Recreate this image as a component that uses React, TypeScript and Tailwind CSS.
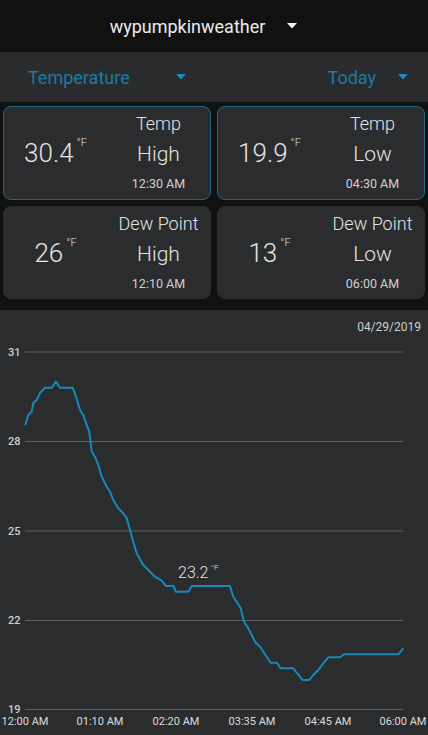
import React from 'react';

const caret = (color: string) => (
  <svg width="10" height="6" viewBox="0 0 10 6">
    <path d="M0 0 L10 0 L5 5.5 Z" fill={color} />
  </svg>
);

type Card = { value: string; label: string; kind: string; time: string; active?: boolean };

const cards: Card[] = [
  { value: '30.4', label: 'Temp', kind: 'High', time: '12:30 AM', active: true },
  { value: '19.9', label: 'Temp', kind: 'Low', time: '04:30 AM', active: true },
  { value: '26', label: 'Dew Point', kind: 'High', time: '12:10 AM' },
  { value: '13', label: 'Dew Point', kind: 'Low', time: '06:00 AM' },
];

// traced from the reference, page coordinates
const points: [number, number][] = [
  [25.3, 425], [28.3, 415], [31.7, 411.7], [33.3, 403], [36.7, 400], [40, 393], [45, 387.7],
  [51.7, 387.7], [56, 381.7], [60, 387.7], [72.7, 387.7], [76, 396.7], [80, 410], [83.3, 415],
  [87.3, 426.7], [89.3, 431.7], [91.7, 451.7], [95, 456.7], [98.3, 465], [101.7, 476.7],
  [106.7, 486.7], [110, 491.7], [113.3, 500], [118.3, 508.3], [123.3, 513.3], [126.7, 518.3],
  [130, 530], [132.7, 540], [136.7, 553.3], [143.3, 565], [150, 571.7], [155, 576.7],
  [161.7, 580.7], [166, 586], [173.3, 586], [176, 591.7], [188.3, 591.7], [191.7, 586],
  [230, 586], [233.3, 596.7], [236.7, 601.7], [240.7, 608.3], [244, 621.7], [248.3, 628.3],
  [251.7, 635], [255, 641.7], [260, 646.7], [263.3, 651.7], [266.7, 656.7], [270.7, 662.7],
  [276.7, 662.7], [280.7, 668.3], [293.3, 668.3], [297.3, 673.3], [302.7, 680], [309.3, 680],
  [313.3, 675], [318.3, 670], [323.3, 663.3], [328.3, 657.3], [340, 657.3], [344, 654.3],
  [398.3, 654.3], [403.3, 648.3],
];

const yTicks = [
  { v: '31', y: 352 },
  { v: '28', y: 441.5 },
  { v: '25', y: 531 },
  { v: '22', y: 620.5 },
  { v: '19', y: 709.5 },
];

const xTicks = [
  { t: '12:00 AM', x: 25 },
  { t: '01:10 AM', x: 100 },
  { t: '02:20 AM', x: 176 },
  { t: '03:35 AM', x: 252 },
  { t: '04:45 AM', x: 328 },
  { t: '06:00 AM', x: 403 },
];

function StatCard({ c }: { c: Card }) {
  return (
    <div
      className={
        'grid grid-cols-2 rounded-[8px] bg-[#2b2c2e] text-[#e4e4e4] font-light ' +
        (c.active ? 'border border-[#1c6a88]' : 'border border-[#2b2c2e]')
      }
    >
      <div className="flex items-center justify-center">
        <span className="text-[26px] leading-[30px]">{c.value}</span>
        <span className="text-[11px] leading-[12px] self-start mt-[30px] ml-[3px]">°F</span>
      </div>
      <div className="flex flex-col items-center">
        <span className="text-[18px] leading-[24px] mt-[5px]">{c.label}</span>
        <span className="text-[21px] leading-[30px] mt-[3px]">{c.kind}</span>
        <span className="text-[12.5px] leading-[16px] mt-[7px] font-normal text-[#d0d0d0]">{c.time}</span>
      </div>
    </div>
  );
}

export default function App() {
  return (
    <div
      className="w-[428px] h-[735px] flex flex-col bg-[#111111] overflow-hidden"
      style={{ fontFamily: 'Roboto, "Noto Sans", sans-serif' }}
    >
      <div className="h-[52px] flex items-center justify-center gap-[22px] pr-[21px] shrink-0">
        <span className="text-[18px] text-[#ececec]">wypumpkinweather</span>
        {caret('#f2f2f2')}
      </div>

      <div className="h-[50px] bg-[#2a2b2d] flex items-center justify-between pl-[28px] pr-[20px] shrink-0">
        <div className="flex items-center gap-[46px]">
          <span className="text-[18px] text-[#1d7aa3]">Temperature</span>
          {caret('#1d8ac0')}
        </div>
        <div className="flex items-center gap-[22px]">
          <span className="text-[18px] text-[#1d7aa3]">Today</span>
          {caret('#1d8ac0')}
        </div>
      </div>

      <div className="grid grid-cols-2 grid-rows-[94px_93px] gap-[6px] px-[3px] pt-[4px] pb-[11px] shrink-0">
        {cards.map((c, i) => (
          <StatCard key={i} c={c} />
        ))}
      </div>

      <div className="flex-1 bg-[#2b2c2e]">
        <svg width="428" height="425" viewBox="0 310 428 425" className="block">
          <text x="421" y="331" textAnchor="end" fontSize="12" fill="#cfcfcf">04/29/2019</text>
          {yTicks.map((t) => (
            <g key={t.v}>
              <line x1="25" x2="403" y1={t.y} y2={t.y} stroke="#5f6062" strokeWidth="1" />
              <text x="8" y={t.y + 3.5} fontSize="11" fontWeight="500" fill="#d0d0d0">{t.v}</text>
            </g>
          ))}
          {xTicks.map((t) => (
            <text key={t.t} x={t.x} y="724.5" textAnchor="middle" fontSize="11" fill="#dcdcdc">{t.t}</text>
          ))}
          <polyline
            points={points.map((p) => p.join(',')).join(' ')}
            fill="none"
            stroke="#1789b8"
            strokeWidth="2"
            strokeLinejoin="round"
          />
          <text x="178" y="578" fontSize="16" fontWeight="300" fill="#e4e4e4">23.2</text>
          <text x="211" y="570" fontSize="8" fontWeight="300" fill="#e4e4e4">°F</text>
        </svg>
      </div>
    </div>
  );
}
